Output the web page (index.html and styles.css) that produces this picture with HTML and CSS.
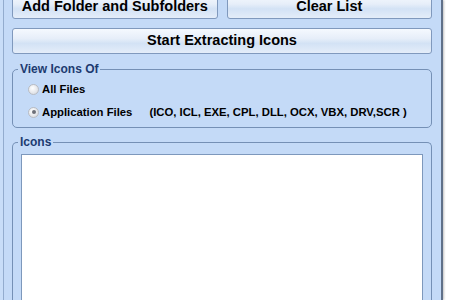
FILE: index.html
```html
<!DOCTYPE html>
<html lang="en">
    <head>
        <meta charset="UTF-8">
        <title>Extract Icons</title>
        <link rel="stylesheet" href="styles.css">
    </head>
    <body>
    <div class="window">
        <div class="client">
            <div class="row-top">
                <button class="btn">Add Folder and Subfolders</button>
                <button class="btn">Clear List</button>
            </div>
            <button class="btn btn-wide">Start Extracting Icons</button>
            <fieldset class="group group-view">
                <legend>View Icons Of</legend>
                <div class="opts">
                    <label class="opt"><span class="radio"></span>All Files</label>
                    <label class="opt"><span class="radio on"></span>Application Files<span class="exts">(ICO, ICL, EXE, CPL, DLL, OCX, VBX, DRV,SCR )</span></label>
                </div>
            </fieldset>
            <fieldset class="group group-icons">
                <legend>Icons</legend>
                <div class="list"></div>
            </fieldset>
        </div>
    </div>
    </body>
</html>
```

FILE: styles.css
```css
*{
    margin:0;
    padding:0;
    box-sizing:border-box;
}
body{
    background:#ffffff;
    font-family:"Liberation Sans", Arial, sans-serif;
    overflow:hidden;
}
.window{
    width:443px;
    height:300px;
    padding-left:3px;
    background:#c8ddf8;
    border-right:2px solid #5f7089;
    box-shadow:1px 0 2px rgba(0,0,0,0.25);
}
.client{
    height:100%;
    overflow:hidden;
    border-left:1px solid #93acce;
    background:#c4daf7;
    padding:0 9px 0 8px;
    display:flex;
    flex-direction:column;
}
.client > *{
    flex-shrink:0;
}
.row-top{
    display:grid;
    grid-template-columns:1fr 1fr;
    gap:9px;
    margin-top:-6px;
}
.row-top .btn{
    height:25px;
}
.btn{
    height:26px;
    border:1px solid #8099bd;
    border-radius:3px;
    background:linear-gradient(#f5f9fe, #e6eef9 40%, #d3e2f5 60%, #e4edf9);
    font-family:"Liberation Sans", Arial, sans-serif;
    font-weight:bold;
    font-size:14.5px;
    color:#000000;
    padding-bottom:2px;
}
.btn-wide{
    margin-top:9px;
    width:100%;
}
.group{
    border:1px solid #7590b5;
    border-radius:5px;
    padding:0;
    min-width:0;
}
.group legend{
    margin-left:5px;
    padding:0 2px;
    font-size:12px;
    line-height:14px;
    font-weight:bold;
    color:#1d3b70;
}
.group-view{
    margin-top:8px;
}
.opts{
    padding:5px 0 7px 15px;
    display:flex;
    flex-direction:column;
    gap:7px;
}
.opt{
    display:flex;
    align-items:center;
    height:16px;
    font-size:11.3px;
    font-weight:bold;
    color:#000000;
}
.radio{
    width:11px;
    height:11px;
    border-radius:50%;
    border:1px solid #b9bcc2;
    background:radial-gradient(circle at 40% 35%, #ffffff, #e4e6ea 60%, #cfd2d8);
    margin-right:3px;
    display:flex;
    align-items:center;
    justify-content:center;
}
.radio.on::after{
    content:"";
    width:4px;
    height:4px;
    border-radius:50%;
    background:#6d7079;
}
.exts{
    margin-left:17px;
    font-size:11.3px;
}
.group-icons{
    margin-top:7px;
    height:200px;
    border-bottom:none;
    border-bottom-left-radius:0;
    border-bottom-right-radius:0;
}
.list{
    margin:5px 8px 0 8px;
    height:180px;
    background:#ffffff;
    border:1px solid #7d98bc;
}
```
